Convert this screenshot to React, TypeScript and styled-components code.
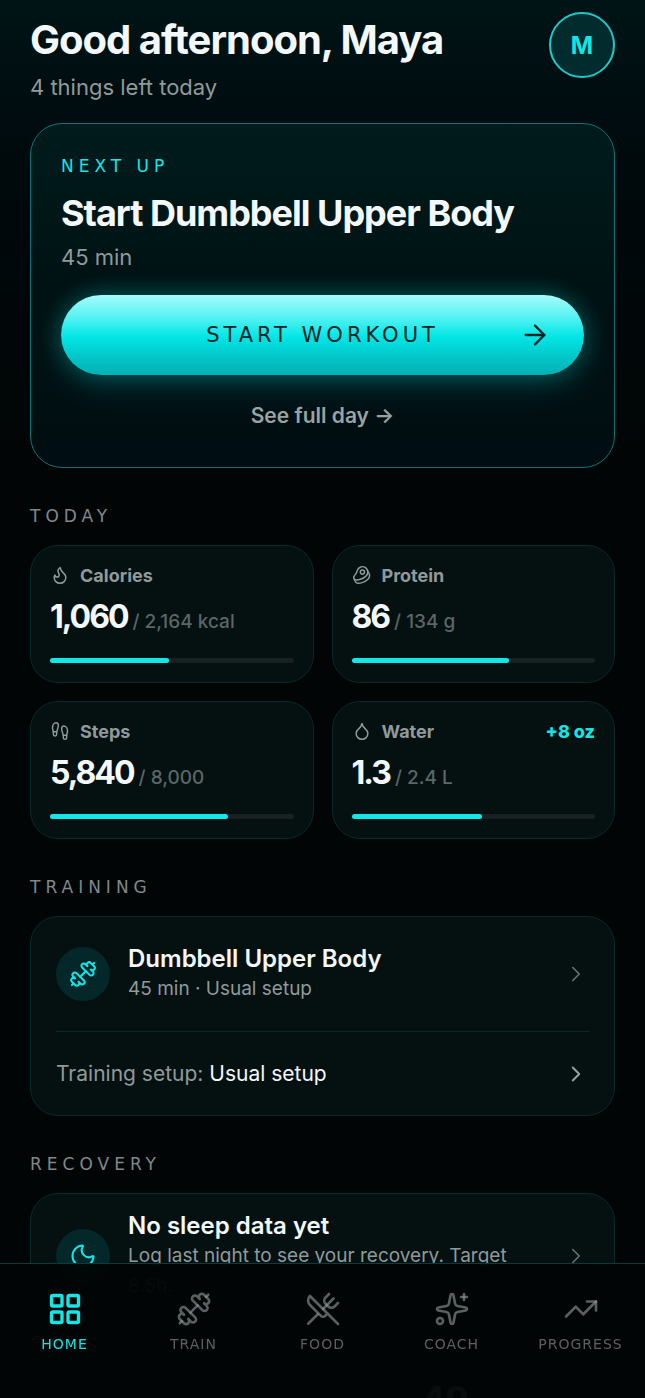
import React from 'react';
import styled, { createGlobalStyle } from 'styled-components';
import {
  ArrowRight,
  Beef,
  ChevronRight,
  Droplet,
  Dumbbell,
  Flame,
  Footprints,
  LayoutGrid,
  Moon,
  Sparkles,
  TrendingUp,
  UtensilsCrossed,
  type LucideIcon,
} from 'lucide-react';

const wide = '"DejaVu Sans", Verdana, sans-serif';
const accent = '#12e6e6';
const muted = '#8f9a9b';

const GlobalStyle = createGlobalStyle`
  * { box-sizing: border-box; }
  body {
    margin: 0;
    background: #010505;
    color: #f3f8fb;
    font-family: Inter, Roboto, sans-serif;
    -webkit-font-smoothing: antialiased;
  }
  h1, h2, h3, p { margin: 0; }
  button { font-family: inherit; cursor: pointer; }
`;

const Shell = styled.div`
  height: 100vh;
  overflow: hidden;
  background: linear-gradient(180deg, #001416 0, #000d10 100px, #00070a 240px, #010505 460px);
`;

const Scroller = styled.main`
  height: 100%;
  overflow-y: auto;
  scrollbar-width: none;
  padding: 12px 30px 0;
`;

const Header = styled.header`
  display: flex;
  justify-content: space-between;
  align-items: flex-start;
`;

const Greeting = styled.div`
  padding-top: 4px;
`;

const Title = styled.h1`
  font-size: 40px;
  line-height: 48px;
  font-weight: 700;
  letter-spacing: -1px;
`;

const Subtitle = styled.p`
  margin-top: 8px;
  font-size: 22px;
  line-height: 30px;
  color: ${muted};
`;

const Avatar = styled.button`
  width: 66px;
  height: 66px;
  border: 2px solid #1cc9c9;
  border-radius: 50%;
  background: #012b2d;
  color: ${accent};
  font-size: 24px;
  font-weight: 700;
  padding: 0;
`;

const Hero = styled.section`
  display: flex;
  flex-direction: column;
  margin-top: 21px;
  padding: 30px 30px 36px;
  border: 1px solid #0d7476;
  border-radius: 32px;
  background: linear-gradient(180deg, #001b1c, #001213 50%, #000d12);
`;

const Eyebrow = styled.p`
  font-family: ${wide};
  font-size: 17px;
  line-height: 24px;
  letter-spacing: 5px;
  color: ${accent};
`;

const HeroTitle = styled.h2`
  margin-top: 12px;
  font-size: 36px;
  line-height: 46px;
  font-weight: 700;
  letter-spacing: -1px;
`;

const HeroMeta = styled.p`
  margin-top: 6px;
  font-size: 22px;
  line-height: 30px;
  color: ${muted};
`;

const StartButton = styled.button`
  display: grid;
  grid-template-columns: 32px 1fr 32px;
  align-items: center;
  height: 80px;
  margin-top: 23px;
  padding: 0 33px;
  border: 0;
  border-radius: 40px;
  background: linear-gradient(180deg, #a6fbfb 0%, #5ff3f3 25%, #04e6e6 52%, #03c9cb 75%, #05b0b4 100%);
  box-shadow: 0 0 22px rgba(18, 230, 230, 0.26), 0 8px 36px rgba(18, 230, 230, 0.2);
  color: #022426;
`;

const StartLabel = styled.span`
  grid-column: 2;
  font-family: ${wide};
  font-size: 21px;
  line-height: 28px;
  letter-spacing: 4px;
`;

const DayLink = styled.a`
  align-self: center;
  margin-top: 26px;
  font-size: 21px;
  line-height: 30px;
  font-weight: 600;
  color: #98a3a3;
  text-decoration: none;
`;

const Section = styled.section`
  margin-top: 36px;
`;

const SectionLabel = styled.h3`
  margin-bottom: 17px;
  font-family: ${wide};
  font-weight: 400;
  font-size: 17px;
  line-height: 24px;
  letter-spacing: 5px;
  color: #7f898a;
`;

const MetricGrid = styled.div`
  display: grid;
  grid-template-columns: 1fr 1fr;
  gap: 18px;
`;

const MetricCard = styled.article`
  padding: 17px 19px 19px;
  border: 1px solid #0a2a2a;
  border-radius: 28px;
  background: #051011;
`;

const MetricHead = styled.div`
  display: flex;
  align-items: center;
  gap: 10px;
  height: 24px;
  color: ${muted};
  font-size: 18px;
  font-weight: 700;
`;

const AddButton = styled.button`
  margin-left: auto;
  padding: 0;
  border: 0;
  background: none;
  color: ${accent};
  font-size: 18px;
  font-weight: 800;
`;

const MetricValue = styled.p`
  margin-top: 10px;
  line-height: 40px;
  font-size: 32px;
  font-weight: 700;
  letter-spacing: -2px;
  white-space: nowrap;
`;

const MetricGoal = styled.span`
  margin-left: 5px;
  font-size: 19px;
  line-height: 1;
  font-weight: 500;
  letter-spacing: 0;
  color: #5b6667;
`;

const Track = styled.div`
  height: 5px;
  margin-top: 21px;
  border-radius: 3px;
  background: #182022;
`;

const Fill = styled.div`
  height: 100%;
  border-radius: 3px;
  background: ${accent};
`;

const ListCard = styled.div`
  padding: 0 25px;
  border: 1px solid #0a2a2a;
  border-radius: 28px;
  background: #051011;
`;

const Row = styled.button<{ $height: number; $divided?: boolean }>`
  display: flex;
  align-items: center;
  width: 100%;
  min-height: ${(p) => p.$height}px;
  padding: 17px 0;
  border: 0;
  border-bottom: ${(p) => (p.$divided ? '1px solid #0a2a2a' : '0')};
  background: none;
  color: inherit;
  text-align: left;
`;

const IconDisc = styled.span`
  display: grid;
  place-items: center;
  flex: none;
  width: 54px;
  height: 54px;
  margin-right: 18px;
  border-radius: 50%;
  background: #04282a;
  color: ${accent};
`;

const RowText = styled.span`
  flex: 1;
  min-width: 0;
  padding-right: 30px;
`;

const RowTitle = styled.span`
  display: block;
  font-size: 24px;
  line-height: 30px;
  font-weight: 600;
`;

const RowMeta = styled.span`
  display: block;
  font-size: 19px;
  line-height: 30px;
  color: ${muted};
`;

const SetupText = styled.span`
  flex: 1;
  font-size: 21px;
  line-height: 30px;
  color: ${muted};
`;

const SetupValue = styled.span`
  color: #f3f8fb;
`;

const Chevron = styled(ChevronRight)<{ $bright?: boolean }>`
  flex: none;
  color: ${(p) => (p.$bright ? '#98a3a3' : '#687374')};
`;

const ScoreRow = styled.div`
  display: flex;
  align-items: baseline;
  justify-content: flex-end;
  margin-top: 58px;
  padding-right: 146px;
  font-size: 36px;
  line-height: 44px;
  font-weight: 700;
`;

const Nav = styled.nav`
  position: fixed;
  left: 0;
  right: 0;
  bottom: 0;
  display: grid;
  grid-template-columns: repeat(5, 1fr);
  height: 135px;
  padding-top: 27px;
  border-top: 1px solid #0b3b3d;
  background: rgba(1, 5, 5, 0.97);
`;

const NavItem = styled.a<{ $active?: boolean }>`
  display: flex;
  flex-direction: column;
  align-items: center;
  gap: 9px;
  font-family: ${wide};
  font-size: 14px;
  line-height: 16px;
  letter-spacing: 1px;
  text-decoration: none;
  color: ${(p) => (p.$active ? accent : 'rgba(143, 154, 155, 0.62)')};
`;

type Metric = {
  icon: LucideIcon;
  name: string;
  value: string;
  goal: string;
  percent: number;
  add?: string;
};

const metrics: Metric[] = [
  { icon: Flame, name: 'Calories', value: '1,060', goal: '/ 2,164 kcal', percent: 49 },
  { icon: Beef, name: 'Protein', value: '86', goal: '/ 134 g', percent: 64.5 },
  { icon: Footprints, name: 'Steps', value: '5,840', goal: '/ 8,000', percent: 73 },
  { icon: Droplet, name: 'Water', value: '1.3', goal: '/ 2.4 L', percent: 53.5, add: '+8 oz' },
];

const tabs: { icon: LucideIcon; name: string }[] = [
  { icon: LayoutGrid, name: 'HOME' },
  { icon: Dumbbell, name: 'TRAIN' },
  { icon: UtensilsCrossed, name: 'FOOD' },
  { icon: Sparkles, name: 'COACH' },
  { icon: TrendingUp, name: 'PROGRESS' },
];

export default function App() {
  return (
    <Shell>
      <GlobalStyle />
      <Scroller>
        <Header>
          <Greeting>
            <Title>Good afternoon, Maya</Title>
            <Subtitle>4 things left today</Subtitle>
          </Greeting>
          <Avatar type="button">M</Avatar>
        </Header>

        <Hero>
          <Eyebrow>NEXT UP</Eyebrow>
          <HeroTitle>Start Dumbbell Upper Body</HeroTitle>
          <HeroMeta>45 min</HeroMeta>
          <StartButton type="button">
            <StartLabel>START WORKOUT</StartLabel>
            <ArrowRight size={32} strokeWidth={1.75} />
          </StartButton>
          <DayLink href="#day">See full day →</DayLink>
        </Hero>

        <Section>
          <SectionLabel>TODAY</SectionLabel>
          <MetricGrid>
            {metrics.map((m) => (
              <MetricCard key={m.name}>
                <MetricHead>
                  <m.icon size={20} strokeWidth={1.75} />
                  {m.name}
                  {m.add && <AddButton type="button">{m.add}</AddButton>}
                </MetricHead>
                <MetricValue>
                  {m.value}
                  <MetricGoal>{m.goal}</MetricGoal>
                </MetricValue>
                <Track>
                  <Fill style={{ width: `${m.percent}%` }} />
                </Track>
              </MetricCard>
            ))}
          </MetricGrid>
        </Section>

        <Section>
          <SectionLabel>TRAINING</SectionLabel>
          <ListCard>
            <Row type="button" $height={115} $divided>
              <IconDisc>
                <Dumbbell size={28} strokeWidth={1.75} />
              </IconDisc>
              <RowText>
                <RowTitle>Dumbbell Upper Body</RowTitle>
                <RowMeta>45 min · Usual setup</RowMeta>
              </RowText>
              <Chevron size={26} strokeWidth={1.5} />
            </Row>
            <Row type="button" $height={83}>
              <SetupText>
                Training setup: <SetupValue>Usual setup</SetupValue>
              </SetupText>
              <Chevron size={26} strokeWidth={1.75} $bright />
            </Row>
          </ListCard>
        </Section>

        <Section>
          <SectionLabel>RECOVERY</SectionLabel>
          <ListCard>
            <Row type="button" $height={122}>
              <IconDisc>
                <Moon size={28} strokeWidth={1.75} />
              </IconDisc>
              <RowText>
                <RowTitle>No sleep data yet</RowTitle>
                <RowMeta>Log last night to see your recovery. Target 8.5h.</RowMeta>
              </RowText>
              <Chevron size={26} strokeWidth={1.5} />
            </Row>
          </ListCard>
        </Section>

        <ScoreRow>49</ScoreRow>
      </Scroller>

      <Nav>
        {tabs.map((t, i) => (
          <NavItem key={t.name} href={`#${t.name.toLowerCase()}`} $active={i === 0}>
            <t.icon size={36} strokeWidth={i === 0 ? 2.25 : 1.75} />
            {t.name}
          </NavItem>
        ))}
      </Nav>
    </Shell>
  );
}
